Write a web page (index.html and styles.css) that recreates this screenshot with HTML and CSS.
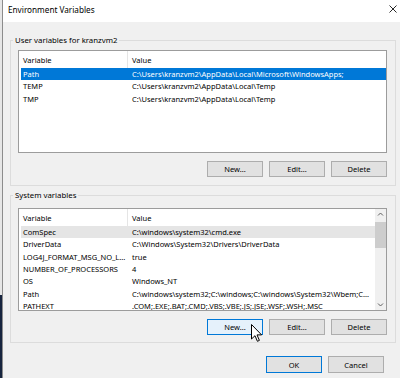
FILE: index.html
```html
<!DOCTYPE html>
<html lang="en">
<head>
    <meta charset="UTF-8">
    <title>Environment Variables</title>
    <link rel="stylesheet" href="styles.css">
</head>
<body>
<div class="screen">
    <div class="desktop-edge"></div>
    <div class="dialog">
        <!-- Title bar -->
        <header class="titlebar">
            <span class="title">Environment Variables</span>
            <svg class="close" width="8" height="8" viewBox="0 0 8 8">
                <path d="M0.5 0.5 L7.5 7.5 M7.5 0.5 L0.5 7.5" stroke="#111" stroke-width="0.9"/>
            </svg>
        </header>

        <div class="content">
            <!-- User variables -->
            <fieldset class="group user-group">
                <legend>User variables for kranzvm2</legend>
                <div class="listview">
                    <div class="list-main">
                        <div class="list-head">
                            <span class="cell-var">Variable</span>
                            <span class="cell-val">Value</span>
                        </div>
                        <div class="row selected">
                            <span class="cell-var">Path</span>
                            <span class="cell-val">C:\Users\kranzvm2\AppData\Local\Microsoft\WindowsApps;</span>
                        </div>
                        <div class="row">
                            <span class="cell-var">TEMP</span>
                            <span class="cell-val">C:\Users\kranzvm2\AppData\Local\Temp</span>
                        </div>
                        <div class="row">
                            <span class="cell-var">TMP</span>
                            <span class="cell-val">C:\Users\kranzvm2\AppData\Local\Temp</span>
                        </div>
                    </div>
                </div>
                <div class="button-row">
                    <button class="btn">New...</button>
                    <button class="btn">Edit...</button>
                    <button class="btn">Delete</button>
                </div>
            </fieldset>

            <!-- System variables -->
            <fieldset class="group system-group">
                <legend>System variables</legend>
                <div class="listview">
                    <div class="list-main">
                        <div class="list-head">
                            <span class="cell-var">Variable</span>
                            <span class="cell-val">Value</span>
                        </div>
                        <div class="row inactive">
                            <span class="cell-var">ComSpec</span>
                            <span class="cell-val">C:\windows\system32\cmd.exe</span>
                        </div>
                        <div class="row">
                            <span class="cell-var">DriverData</span>
                            <span class="cell-val">C:\Windows\System32\Drivers\DriverData</span>
                        </div>
                        <div class="row">
                            <span class="cell-var">LOG4J_FORMAT_MSG_NO_L...</span>
                            <span class="cell-val">true</span>
                        </div>
                        <div class="row">
                            <span class="cell-var">NUMBER_OF_PROCESSORS</span>
                            <span class="cell-val">4</span>
                        </div>
                        <div class="row">
                            <span class="cell-var">OS</span>
                            <span class="cell-val">Windows_NT</span>
                        </div>
                        <div class="row">
                            <span class="cell-var">Path</span>
                            <span class="cell-val">C:\windows\system32;C:\windows;C:\windows\System32\Wbem;C...</span>
                        </div>
                        <div class="row">
                            <span class="cell-var">PATHEXT</span>
                            <span class="cell-val">.COM;.EXE;.BAT;.CMD;.VBS;.VBE;.JS;.JSE;.WSF;.WSH;.MSC</span>
                        </div>
                    </div>
                    <div class="scrollbar">
                        <svg class="arrow" width="11" height="11" viewBox="0 0 11 11">
                            <path d="M3 6.5 L5.5 4 L8 6.5" fill="none" stroke="#606060" stroke-width="1"/>
                        </svg>
                        <div class="track">
                            <div class="thumb"></div>
                        </div>
                        <svg class="arrow" width="11" height="11" viewBox="0 0 11 11">
                            <path d="M3 4.5 L5.5 7 L8 4.5" fill="none" stroke="#606060" stroke-width="1"/>
                        </svg>
                    </div>
                </div>
                <div class="button-row">
                    <button class="btn focused">New...</button>
                    <button class="btn">Edit...</button>
                    <button class="btn">Delete</button>
                </div>
            </fieldset>

            <div class="dialog-buttons">
                <button class="btn wide default">OK</button>
                <button class="btn wide">Cancel</button>
            </div>
        </div>
    </div>

    <!-- mouse pointer over New... -->
    <svg class="pointer" width="12" height="19" viewBox="0 0 12 19">
        <path d="M0.5 0.5 L0.5 15 L4 11.7 L6.4 17.3 L8.4 16.4 L6 10.9 L10.6 10.9 Z" fill="#fff" stroke="#000" stroke-width="1" stroke-linejoin="miter"/>
    </svg>
</div>
</body>
</html>
```

FILE: styles.css
```css
/* Page */
body {
    margin: 0;
    font-family: "Noto Sans", "Open Sans", Arial, sans-serif;
    font-size: 7.5px;
    color: #000;
    background-color: #f0f0f0;
}

.screen {
    display: flex;
    width: 400px;
    height: 378px;
    position: relative;
    overflow: hidden;
}

.desktop-edge {
    width: 2px;
    background: linear-gradient(#e6e6e6 0, #e6e6e6 78%, #17253f 78%);
}

/* Dialog window */
.dialog {
    flex: 1;
    display: flex;
    flex-direction: column;
    border-left: 1px solid #8c8c8c;
    background-color: #f0f0f0;
}

.titlebar {
    height: 22px;
    display: flex;
    justify-content: space-between;
    align-items: center;
    padding: 0 3px 0 5px;
    background-color: #fff;
}

.title {
    font-size: 8.2px;
    margin-top: -3px;
}

.close {
    margin-top: -4px;
}

.content {
    padding: 13px 4px 0 7px;
}

/* Group boxes */
.group {
    margin: 0;
    border: 1px solid #dcdcdc;
    padding: 5px 8px 8px 7px;
}

.group legend {
    padding: 0 2px;
    margin-left: -5px;
    line-height: 10px;
    font-size: 7.8px;
}

.system-group {
    margin-top: 4px;
    padding-top: 8px;
    padding-bottom: 7px;
}

/* List views */
.listview {
    display: flex;
    height: 101px;
    border: 1px solid #9c9c9c;
    background-color: #fff;
}

.list-main {
    flex: 1;
    overflow: hidden;
}

.list-head,
.row {
    display: grid;
    grid-template-columns: 107px 246px;
    margin-left: 2px;
    white-space: nowrap;
}

.list-head {
    height: 17px;
    align-items: center;
}

.list-head .cell-var {
    height: 100%;
    display: flex;
    align-items: center;
    border-right: 1px solid #e5e5e5;
}

.row {
    height: 12.33px;
    line-height: 12.33px;
}

.cell-var {
    padding-left: 2px;
    overflow: hidden;
}

.cell-val {
    padding-left: 4px;
    overflow: hidden;
}

.row.selected {
    background-color: #0078d7;
    color: #fff;
}

.row.inactive {
    background-color: #e5e5e5;
}

/* Scrollbar */
.scrollbar {
    width: 11px;
    display: flex;
    flex-direction: column;
    background-color: #f0f0f0;
}

.arrow {
    display: block;
}

.track {
    flex: 1;
    padding-top: 2px;
}

.thumb {
    height: 26px;
    background-color: #cdcdcd;
}

/* Buttons */
.button-row {
    display: flex;
    justify-content: flex-end;
    gap: 6px;
    margin-top: 8px;
}

.btn {
    width: 56px;
    height: 16px;
    padding: 0;
    font-family: inherit;
    font-size: 7.5px;
    color: #000;
    background-color: #e1e1e1;
    border: 1px solid #adadad;
    border-radius: 0;
}

.btn.focused {
    background-color: #e5f1fb;
    border-color: #0078d7;
}

.dialog-buttons {
    display: flex;
    justify-content: flex-end;
    gap: 6px;
    margin-top: 13px;
    margin-right: 12px;
}

.btn.wide {
    height: 17px;
}

.btn.default {
    border-color: #0078d7;
}

.pointer {
    position: absolute;
    left: 251px;
    top: 324px;
}
```
